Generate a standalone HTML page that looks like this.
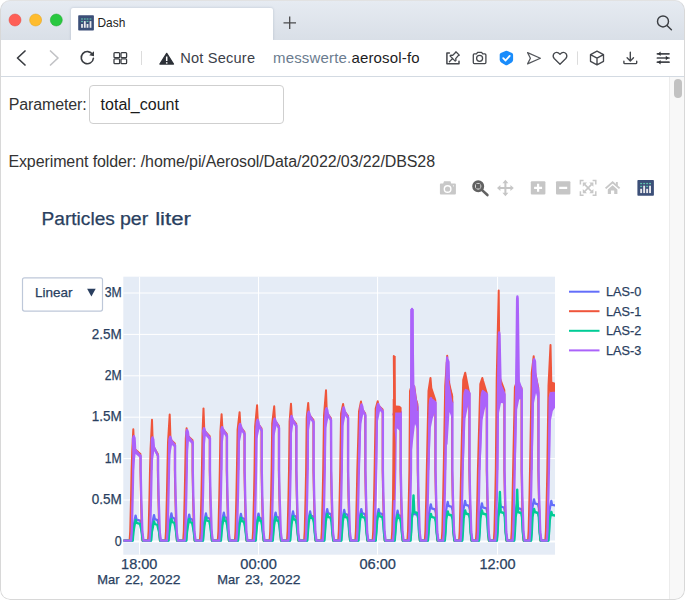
<!DOCTYPE html>
<html><head><meta charset="utf-8">
<style>
html,body{margin:0;padding:0;width:685px;height:600px;overflow:hidden;background:#fff;}
body{font-family:"Liberation Sans",sans-serif;position:relative;}
.win{position:absolute;left:0;top:0;width:685px;height:600px;border-radius:10px;overflow:hidden;background:#fff;}
.frame{position:absolute;left:0;top:0;width:683px;height:598px;border:1px solid #d8d8d8;border-top-color:#e2e2e2;border-radius:10px;pointer-events:none;}
.tabbar{position:absolute;left:0;top:0;width:685px;height:40px;background:linear-gradient(#e6ebf2,#d9dfe7);}
.tab{position:absolute;left:71px;top:7.5px;width:202px;height:32.5px;background:#fff;border-radius:2px 2px 0 0;box-shadow:0 0 2.5px rgba(70,90,120,0.28);}
.tb{position:absolute;left:0;top:40px;width:685px;height:36px;background:#fff;border-bottom:1px solid #d3dae2;}
.abs{position:absolute;}
.t{position:absolute;white-space:pre;line-height:1;}
.sb{position:absolute;left:669px;top:77px;width:16px;height:523px;background:#f8f8f8;border-left:1px solid #ececec;}
.thumb{position:absolute;left:4px;top:2px;width:8px;height:19px;border-radius:4px;background:#c2c2c2;}
.inp{position:absolute;left:89.3px;top:85px;width:192.5px;height:36.6px;border:1px solid #cfcfcf;border-radius:4px;background:#fff;}
svg{position:absolute;left:0;top:0;overflow:visible;}
</style></head><body>
<div class="win">
 <div class="tabbar"></div>
 <div class="tab"></div>
 <div class="tb"></div>
 <svg width="685" height="77" viewBox="0 0 685 77">
  <circle cx="15" cy="20" r="6" fill="#fe5f57" stroke="#e2463f" stroke-width="0.5"/>
  <circle cx="35.6" cy="20" r="6" fill="#febc2e" stroke="#e1a116" stroke-width="0.5"/>
  <circle cx="56.3" cy="20" r="6" fill="#28c840" stroke="#1aab29" stroke-width="0.5"/>
  <!-- dash favicon -->
  <rect x="78.2" y="15.2" width="15.7" height="15.4" rx="0.8" fill="#3c4f78"/>
  <g fill="#62c2ad"><rect x="81.1" y="18.4" width="1.8" height="1.2"/><rect x="83.9" y="18.4" width="1.8" height="1.2"/><rect x="86.6" y="18.4" width="1.8" height="1.2"/><rect x="89.6" y="18.4" width="1.8" height="1.2"/><rect x="81.1" y="20.9" width="1.8" height="1.2"/><rect x="86.6" y="20.9" width="1.8" height="1.2"/></g>
  <g fill="#e8e8ec"><rect x="81.1" y="24" width="1.8" height="3.8"/><rect x="83.9" y="21.1" width="1.8" height="6.7"/><rect x="86.6" y="24" width="1.8" height="3.8"/><rect x="89.6" y="21.1" width="1.8" height="6.7"/></g>
  <text x="97.5" y="27.2" font-family="Liberation Sans" font-size="11.9" fill="#222">Dash</text>
  <path d="M283.5 22.8 H296 M289.7 16.5 V29" stroke="#4a4a4c" stroke-width="1.3"/>
  <g fill="none" stroke="#3c3f44" stroke-width="1.45" stroke-linecap="round">
   <circle cx="663" cy="21.4" r="5.5"/>
   <path d="M667 25.4 L671.4 29.8"/>
  </g>
  <!-- toolbar -->
  <g fill="none" stroke-width="1.7" stroke-linecap="round" stroke-linejoin="round">
   <path d="M25 51 L17.5 58 L25 65" stroke="#3a3d42"/>
   <path d="M50.5 51 L58 58 L50.5 65" stroke="#c2c3c6"/>
  </g>
  <g fill="none" stroke="#3a3d42" stroke-width="1.6" stroke-linecap="round">
   <path d="M92.6 54.6 A6.1 6.1 0 1 0 93.4 58.2"/>
  </g>
  <path d="M94 51.2 L94 56.2 L89.2 55.2 Z" fill="#3a3d42"/>
  <g fill="none" stroke="#3a3d42" stroke-width="1.3">
   <rect x="114" y="52.7" width="5.6" height="4.9" rx="0.9"/><rect x="121" y="52.7" width="5.6" height="4.9" rx="0.9"/>
   <rect x="114" y="58.9" width="5.6" height="4.8" rx="0.9"/><rect x="121" y="58.9" width="5.6" height="4.8" rx="0.9"/>
  </g>
  <line x1="141.5" y1="51" x2="141.5" y2="65" stroke="#dcdcdc" stroke-width="1"/>
  <path d="M166.7 53.4 L173.5 64 L159.9 64 Z" fill="#2c3037" stroke="#2c3037" stroke-width="1.3" stroke-linejoin="round"/>
  <path d="M166.7 56.4 V60.9" stroke="#fff" stroke-width="1.5"/><rect x="165.95" y="62.2" width="1.5" height="1.4" fill="#fff"/>
  <text x="180.2" y="63.4" font-family="Liberation Sans" font-size="14.6" letter-spacing="0.2" fill="#3b4049">Not Secure</text>
  <defs><linearGradient id="fade" x1="0" x2="1"><stop offset="0" stop-color="#fff" stop-opacity="0"/><stop offset="1" stop-color="#fff"/></linearGradient></defs>
  <text x="273" y="63.4" font-family="Liberation Sans" font-size="15" letter-spacing="0.17" fill="#6b7c8f">messwerte.<tspan fill="#1c1c1e">aerosol-fo</tspan></text>
  <rect x="419.6" y="45" width="8" height="25" fill="#fff"/>
  <g fill="none" stroke="#45484d" stroke-width="1.4" stroke-linecap="round" stroke-linejoin="round">
   <!-- edit/pin -->
   <path d="M449.4 53.1 H446.9 V63.7 H459 V61.3" stroke-width="1.5"/>
   <path d="M455.9 51.7 L459.3 55.1 L458.2 55.7 L455.7 58.6 L456 60.3 L455.2 61.1 L450 55.9 L450.8 55.1 L452.5 55.4 L455.3 52.8 Z M452.7 58.4 L449.4 61.7" stroke-width="1.3"/>
   <!-- camera -->
   <path d="M473.3 54.9 Q473.3 53.9 474.3 53.9 H476.5 L477.6 52.4 H481.6 L482.7 53.9 H484.9 Q485.9 53.9 485.9 54.9 V62.6 Q485.9 63.6 484.9 63.6 H474.3 Q473.3 63.6 473.3 62.6 Z" stroke-width="1.3"/>
   <circle cx="479.6" cy="58.3" r="3" stroke-width="1.3"/>
   <!-- send -->
   <path d="M527.6 52.6 L540.4 58.2 L527.6 63.9 L530.4 58.2 Z" stroke="#55585d" stroke-width="1.25"/>
   <!-- heart -->
   <path d="M560 64.2 L554.2 58.5 Q552.4 56.4 553.7 54 Q556.6 50.8 560 54.2 Q563.4 50.8 566.3 54 Q567.6 56.4 565.8 58.5 Z" stroke-width="1.3"/>
   <!-- cube -->
   <path d="M597 51.1 L603.5 54.6 V61.3 L597 64.8 L590.5 61.3 V54.6 Z M590.5 54.6 L597 58.1 L603.5 54.6 M597 58.1 V64.8" stroke-width="1.35"/>
   <!-- download -->
   <path d="M630.3 52.2 V60.8 M627.1 57.8 L630.3 61 L633.5 57.8 M623.9 61.3 V62.7 Q623.9 63.6 624.8 63.6 H635.8 Q636.7 63.6 636.7 62.7 V61.3"/>
   <!-- sliders -->
   <path d="M657.4 53.8 H669 M657.4 58 H669 M657.4 62.2 H669" stroke-width="1.7"/>
  </g>
  <path d="M505.5 50.9 Q506.4 50.5 507.3 50.9 L512 53 Q513.1 53.5 513.1 54.7 V59.8 Q513.1 61.6 511.6 62.6 L507.5 65 Q506.4 65.6 505.3 65 L501.2 62.6 Q499.7 61.6 499.7 59.8 V54.7 Q499.7 53.5 500.8 53 Z" fill="#1a8cfb"/>
  <path d="M503.2 58.1 L505.6 60.5 L509.7 55.9" fill="none" stroke="#fff" stroke-width="1.8" stroke-linecap="round" stroke-linejoin="round"/>
  <g fill="#2e3136"><path d="M657.8 53.8 L660.6 51.5 L660.6 56.1 Z M668.6 58 L665.8 55.7 L665.8 60.3 Z M657.8 62.2 L660.6 59.9 L660.6 64.5 Z"/></g>
  <line x1="577.5" y1="51.4" x2="577.5" y2="64.8" stroke="#dcdcdc" stroke-width="1"/>
 </svg>
 <div class="t" style="left:8.8px;top:97px;font-size:16px;letter-spacing:-0.15px;color:#333;">Parameter:</div>
 <div class="inp"></div>
 <div class="t" style="left:100.6px;top:97px;font-size:16px;color:#1a1a1a;">total_count</div>
 <div class="t" style="left:8.4px;top:154.1px;font-size:16px;letter-spacing:-0.1px;color:#333;">Experiment folder: /home/pi/Aerosol/Data/2022/03/22/DBS28</div>
 <!-- modebar -->
 <svg width="685" height="600" viewBox="0 0 685 600">
  <path d="M440.8 183.6 H443.2 L444 181.2 H450.4 L451.2 183.6 H455 Q455.9 183.6 455.9 184.5 V193.6 Q455.9 194.5 455 194.5 H440.8 Q439.9 194.5 439.9 193.6 V184.5 Q439.9 183.6 440.8 183.6 Z" fill="#c8c8c8"/>
  <circle cx="447.6" cy="189" r="3.3" fill="none" stroke="#fff" stroke-width="1.4"/>
  <circle cx="453.4" cy="185.8" r="0.6" fill="#fff"/>
  <g fill="none" stroke="#626262" stroke-width="2.9"><circle cx="478.2" cy="186.3" r="4.55"/><path d="M481.8 189.9 L487.4 195" stroke-linecap="round" stroke-width="2.6"/></g>
  <rect x="475.9" y="184" width="4.6" height="4.6" fill="#626262"/>
  <g fill="none" stroke="#c6c6c6" stroke-width="2"><path d="M505.4 181.5 V194.5 M498.5 188 H512.3"/></g>
  <g fill="#c6c6c6"><path d="M502.4 183.2 L505.4 179.8 L508.4 183.2 Z M502.4 192.8 L505.4 196.2 L508.4 192.8 Z M500.4 185 L497 188 L500.4 191 Z M510.4 185 L513.8 188 L510.4 191 Z"/></g>
  <rect x="530.8" y="181.2" width="14.6" height="13.3" rx="1" fill="#c6c6c6"/>
  <path d="M538.1 183.8 V191.8 M534.1 187.8 H542.1" stroke="#fff" stroke-width="2.2"/>
  <rect x="556" y="181.2" width="14.4" height="13.3" rx="1" fill="#c6c6c6"/>
  <path d="M559.2 187.8 H567.2" stroke="#fff" stroke-width="2.2"/>
  <g fill="none" stroke="#c8c8c8" stroke-width="1.5">
   <path d="M580.4 184.6 V180.6 H583.6 M592.6 180.6 H595.8 V184.6 M595.8 191.2 V195.2 H592.6 M583.6 195.2 H580.4 V191.2"/>
   <path d="M584.6 184.3 L591.6 191.5 M591.6 184.3 L584.6 191.5" stroke-width="1.7"/>
  </g>
  <g fill="#c8c8c8"><path d="M582.8 182.6 H587 L582.8 186.8 Z M593.4 182.6 H589.2 L593.4 186.8 Z M582.8 193.2 H587 L582.8 189 Z M593.4 193.2 H589.2 L593.4 189 Z"/></g>
  <path d="M605.6 188.4 L612.6 182.2 L619.6 188.4" fill="none" stroke="#c8c8c8" stroke-width="1.9"/>
  <path d="M615.9 182 H617.8 V186.2 L615.9 184.6 Z" fill="#c8c8c8"/>
  <path d="M607.8 189.4 L612.6 185.3 L617.4 189.4 V194 H614.2 V190.6 H611 V194 H607.8 Z" fill="#c8c8c8"/>
  <rect x="637.4" y="179.9" width="16.5" height="15.9" rx="0.8" fill="#3c4f78"/>
  <g fill="#62c2ad"><rect x="640.2" y="182.9" width="1.9" height="1.3"/><rect x="643.2" y="182.9" width="1.9" height="1.3"/><rect x="646.2" y="182.9" width="1.9" height="1.3"/><rect x="649.1" y="182.9" width="1.9" height="1.3"/><rect x="640.2" y="185.8" width="1.9" height="1.3"/><rect x="646.2" y="185.8" width="1.9" height="1.3"/></g>
  <g fill="#e8e8ec"><rect x="640.2" y="188.8" width="1.9" height="4.3"/><rect x="643.2" y="185.7" width="1.9" height="7.4"/><rect x="646.2" y="188.8" width="1.9" height="4.3"/><rect x="649.1" y="185.7" width="1.9" height="7.4"/></g>
 </svg>
 <svg class="plot" width="685" height="600" viewBox="0 0 685 600">
<rect x="123.3" y="276.7" width="431.7" height="278" fill="#e5ecf6"/>
<line x1="123.3" x2="555" y1="293.0" y2="293.0" stroke="#fff" stroke-width="1"/><line x1="123.3" x2="555" y1="334.4" y2="334.4" stroke="#fff" stroke-width="1"/><line x1="123.3" x2="555" y1="375.8" y2="375.8" stroke="#fff" stroke-width="1"/><line x1="123.3" x2="555" y1="417.2" y2="417.2" stroke="#fff" stroke-width="1"/><line x1="123.3" x2="555" y1="458.6" y2="458.6" stroke="#fff" stroke-width="1"/><line x1="123.3" x2="555" y1="500.0" y2="500.0" stroke="#fff" stroke-width="1"/><line x1="139.6" x2="139.6" y1="276.7" y2="554.7" stroke="#fff" stroke-width="1"/><line x1="258.5" x2="258.5" y1="276.7" y2="554.7" stroke="#fff" stroke-width="1"/><line x1="377.6" x2="377.6" y1="276.7" y2="554.7" stroke="#fff" stroke-width="1"/><line x1="497.6" x2="497.6" y1="276.7" y2="554.7" stroke="#fff" stroke-width="1"/><line x1="123.3" x2="555" y1="541.4" y2="541.4" stroke="#fff" stroke-width="2"/>
<clipPath id="cp"><rect x="123.3" y="276.7" width="431.7" height="278"/></clipPath>
<g clip-path="url(#cp)"><polyline fill="none" stroke="#636efa" stroke-width="2.3" stroke-linejoin="round" points="123.3,540.6 132.5,540.6 133.2,532.0 133.9,524.6 134.6,520.6 135.6,515.6 136.4,519.6 140.1,520.6 141.0,524.6 141.9,532.0 142.9,540.6 150.9,540.6 151.6,532.0 152.3,524.1 153.0,520.1 154.0,515.1 154.8,519.1 157.5,520.1 158.4,524.1 159.3,532.0 160.3,540.6 168.3,540.6 169.0,532.0 169.7,522.5 170.4,518.5 171.4,513.5 172.2,517.5 174.5,518.5 175.4,522.5 176.3,532.0 177.3,540.6 186.1,540.6 186.8,532.0 187.5,523.6 188.2,519.6 189.2,514.6 190.0,518.6 192.2,519.6 193.1,523.6 194.0,532.0 195.0,540.6 202.8,540.6 203.5,532.0 204.2,522.5 204.9,518.5 205.9,513.5 206.7,517.5 209.4,518.5 210.3,522.5 211.2,532.0 212.2,540.6 220.7,540.6 221.4,532.0 222.1,521.7 222.8,517.7 223.8,512.7 224.6,516.7 226.4,517.7 227.3,521.7 228.2,532.0 229.2,540.6 237.8,540.6 238.5,532.0 239.2,522.9 239.9,518.9 240.9,513.9 241.7,517.9 244.1,518.9 245.0,522.9 245.9,532.0 246.9,540.6 255.4,540.6 256.1,532.0 256.8,522.6 257.5,518.6 258.5,513.6 259.3,517.6 261.2,518.6 262.1,522.6 263.0,532.0 264.0,540.6 272.5,540.6 273.2,532.0 273.9,521.6 274.6,517.6 275.6,512.6 276.4,516.6 278.5,517.6 279.4,521.6 280.3,532.0 281.3,540.6 289.9,540.6 290.6,532.0 291.3,520.5 292.0,516.5 293.0,511.5 293.8,515.5 295.9,516.5 296.8,520.5 297.7,532.0 298.7,540.6 307.0,540.6 307.7,532.0 308.4,520.5 309.1,516.5 310.1,511.5 310.9,515.5 313.1,516.5 314.0,520.5 314.9,532.0 315.9,540.6 324.1,540.6 324.8,532.0 325.5,518.1 326.2,514.1 327.2,509.1 328.0,513.1 330.7,514.1 331.6,518.1 332.5,532.0 333.5,540.6 341.1,540.6 341.8,532.0 342.5,518.9 343.2,514.9 344.2,509.9 345.0,513.9 347.6,514.9 348.5,518.9 349.4,532.0 350.4,540.6 358.2,540.6 358.9,532.0 359.6,518.1 360.3,514.1 361.3,509.1 362.1,513.1 364.9,514.1 365.8,518.1 366.7,532.0 367.7,540.6 375.5,540.6 376.2,532.0 376.9,518.1 377.6,514.1 378.6,509.1 379.4,513.1 382.3,514.1 383.2,518.1 384.1,532.0 385.1,540.6 394.5,540.6 395.2,532.0 395.9,519.7 396.6,515.7 397.6,510.7 398.4,514.7 400.2,515.7 401.1,519.7 402.0,532.0 403.0,540.6 410.3,540.6 411.0,532.0 411.7,518.9 412.4,514.9 413.4,509.9 414.2,513.9 417.4,514.9 418.3,518.9 419.2,532.0 420.2,540.6 427.7,540.6 428.4,532.0 429.1,513.3 429.8,509.3 430.8,504.3 431.6,508.3 435.0,509.3 435.9,513.3 436.8,532.0 437.8,540.6 444.6,540.6 445.3,532.0 446.0,510.9 446.7,506.9 447.7,501.9 448.5,505.9 451.8,506.9 452.7,510.9 453.6,532.0 454.6,540.6 462.0,540.6 462.7,532.0 463.4,509.9 464.1,505.9 465.1,500.9 465.9,504.9 469.0,505.9 469.9,509.9 470.8,532.0 471.8,540.6 478.8,540.6 479.5,532.0 480.2,512.3 480.9,508.3 481.9,503.3 482.7,507.3 486.4,508.3 487.3,512.3 488.2,532.0 489.2,540.6 496.7,540.6 497.4,532.0 498.1,511.5 498.8,507.5 499.8,502.5 500.6,506.5 504.0,507.5 504.9,511.5 505.8,532.0 506.8,540.6 514.0,540.6 514.7,532.0 515.4,513.1 516.1,509.1 517.1,504.1 517.9,508.1 521.2,509.1 522.1,513.1 523.0,532.0 524.0,540.6 530.9,540.6 531.6,532.0 532.3,508.3 533.0,504.3 534.0,499.3 534.8,503.3 538.0,504.3 538.9,508.3 539.8,532.0 540.8,540.6 548.2,540.6 548.9,532.0 549.6,509.9 550.3,505.9 551.3,500.9 552.1,504.9 558.9,505.9 559.8,509.9 560.7,532.0 561.7,540.6"/><polyline fill="none" stroke="#EF553B" stroke-width="2" stroke-linejoin="round" points="123.3,540.6 129.6,540.6 130.2,531.0 131.1,495.0 131.6,470.0 132.2,451.5 133.3,429.2 134.1,448.5 140.4,454.0 140.4,470.0 140.9,495.0 141.8,531.0 142.5,540.6 148.0,540.6 148.6,531.0 149.5,495.0 150.0,470.0 150.6,448.5 152.0,419.8 152.8,445.5 157.8,454.0 157.8,470.0 158.3,495.0 159.2,531.0 159.9,540.6 165.4,540.6 166.0,531.0 166.9,495.0 167.4,470.0 168.0,442.5 169.7,414.6 170.5,439.5 174.8,443.5 174.8,470.0 175.3,495.0 176.2,531.0 176.9,540.6 183.2,540.6 183.8,531.0 184.7,495.0 185.2,470.0 185.8,438.5 186.6,428.3 187.4,435.5 192.5,440.3 192.5,470.0 193.0,495.0 193.9,531.0 194.6,540.6 199.9,540.6 200.5,531.0 201.4,495.0 201.9,470.0 202.5,433.5 203.5,408.4 204.3,430.5 209.7,436.2 209.7,470.0 210.2,495.0 211.1,531.0 211.8,540.6 217.8,540.6 218.4,531.0 219.3,495.0 219.8,470.0 220.4,431.5 221.6,414.3 222.4,428.5 226.7,433.9 226.7,470.0 227.2,495.0 228.1,531.0 228.8,540.6 234.9,540.6 235.5,531.0 236.4,495.0 236.9,470.0 237.6,429.5 239.6,412.2 240.4,426.5 244.4,431.8 244.4,470.0 244.9,495.0 245.8,531.0 246.5,540.6 252.5,540.6 253.1,531.0 254.0,495.0 254.5,470.0 255.1,426.5 257.1,405.2 257.9,423.5 261.5,428.3 261.5,470.0 262.0,495.0 262.9,531.0 263.6,540.6 269.6,540.6 270.2,531.0 271.1,495.0 271.6,470.0 272.2,423.5 274.2,406.3 275.0,420.5 278.8,425.9 278.8,470.0 279.3,495.0 280.2,531.0 280.9,540.6 287.0,540.6 287.6,531.0 288.5,495.0 289.0,470.0 289.6,421.5 291.0,403.7 291.8,418.5 296.2,423.9 296.2,470.0 296.7,495.0 297.6,531.0 298.3,540.6 304.1,540.6 304.7,531.0 305.6,495.0 306.1,470.0 306.7,417.5 308.2,403.1 309.0,414.5 313.4,419.8 313.4,470.0 313.9,495.0 314.8,531.0 315.5,540.6 321.2,540.6 321.8,531.0 322.7,495.0 323.2,470.0 324.0,415.5 326.0,390.3 326.8,412.5 330.8,418.0 331.0,470.0 331.5,495.0 332.4,531.0 333.1,540.6 338.2,540.6 338.8,531.0 339.7,495.0 340.2,470.0 341.1,413.5 343.1,403.9 343.9,410.5 347.9,415.9 347.9,470.0 348.4,495.0 349.3,531.0 350.0,540.6 355.3,540.6 355.9,531.0 356.8,495.0 357.3,470.0 359.0,411.5 361.0,401.5 361.8,408.5 365.2,413.5 365.2,470.0 365.7,495.0 366.6,531.0 367.3,540.6 372.6,540.6 373.2,531.0 374.1,495.0 374.6,470.0 375.7,408.5 377.7,401.3 378.5,405.5 382.6,409.4 382.6,470.0 383.1,495.0 384.0,531.0 384.7,540.6 391.6,540.6 392.2,531.0 393.1,495.0 393.6,470.0 394.2,410.0 393.8,356.0 394.6,407.0 400.5,408.0 400.5,470.0 401.0,495.0 401.9,531.0 402.6,540.6 407.4,540.6 408.0,531.0 408.9,495.0 409.4,470.0 410.0,391.0 411.5,386.0 412.3,388.0 417.4,404.0 417.7,470.0 418.2,495.0 419.1,531.0 419.8,540.6 424.8,540.6 425.4,531.0 426.3,495.0 426.8,470.0 428.5,391.0 430.5,378.0 431.3,388.0 435.3,400.0 435.3,470.0 435.8,495.0 436.7,531.0 437.4,540.6 441.7,540.6 442.3,531.0 443.2,495.0 443.7,470.0 445.2,386.0 447.2,355.8 448.0,383.0 452.1,396.0 452.1,470.0 452.6,495.0 453.5,531.0 454.2,540.6 459.1,540.6 459.7,531.0 460.6,495.0 461.1,470.0 463.2,380.0 465.2,372.7 466.0,377.0 469.3,394.0 469.3,470.0 469.8,495.0 470.7,531.0 471.4,540.6 475.9,540.6 476.5,531.0 477.4,495.0 477.9,470.0 480.3,384.0 482.3,378.0 483.1,381.0 486.7,393.0 486.7,470.0 487.2,495.0 488.1,531.0 488.8,540.6 493.8,540.6 494.4,531.0 495.3,495.0 495.8,470.0 496.7,380.0 498.7,290.5 499.5,377.0 504.3,390.0 504.3,470.0 504.8,495.0 505.7,531.0 506.4,540.6 511.1,540.6 511.7,531.0 512.6,495.0 513.1,470.0 514.9,387.0 516.9,381.6 517.7,384.0 521.5,388.0 521.5,470.0 522.0,495.0 522.9,531.0 523.6,540.6 528.0,540.6 528.6,531.0 529.5,495.0 530.0,470.0 531.7,373.0 533.7,356.2 534.5,370.0 538.3,388.0 538.3,470.0 538.8,495.0 539.7,531.0 540.4,540.6 545.3,540.6 545.9,531.0 546.8,495.0 547.3,470.0 548.5,385.5 550.5,345.0 551.3,382.5 558.6,385.0 559.2,470.0 559.7,495.0 560.6,531.0 561.3,540.6"/><polyline fill="none" stroke="#00cc96" stroke-width="2.4" stroke-linejoin="round" points="123.3,540.6 132.7,540.6 133.4,532.0 134.1,527.9 134.8,523.9 135.7,519.9 136.5,522.9 140.0,523.9 140.9,527.9 141.7,532.0 142.7,540.6 151.1,540.6 151.8,532.0 152.5,529.0 153.2,525.0 154.1,521.5 154.9,524.0 157.4,525.0 158.3,529.0 159.1,532.0 160.1,540.6 168.5,540.6 169.2,532.0 169.9,527.0 170.6,523.0 171.5,519.0 172.3,522.0 174.4,523.0 175.3,527.0 176.1,532.0 177.1,540.6 186.3,540.6 187.0,532.0 187.7,527.0 188.4,523.0 189.3,519.0 190.1,522.0 192.1,523.0 193.0,527.0 193.8,532.0 194.8,540.6 203.0,540.6 203.7,532.0 204.4,525.5 205.1,521.5 206.0,517.5 206.8,520.5 209.3,521.5 210.2,525.5 211.0,532.0 212.0,540.6 220.9,540.6 221.6,532.0 222.3,525.5 223.0,521.5 223.9,517.5 224.7,520.5 226.3,521.5 227.2,525.5 228.0,532.0 229.0,540.6 238.0,540.6 238.7,532.0 239.4,525.9 240.1,521.9 241.0,517.9 241.8,520.9 244.0,521.9 244.9,525.9 245.7,532.0 246.7,540.6 255.6,540.6 256.3,532.0 257.0,525.1 257.7,521.1 258.6,517.1 259.4,520.1 261.1,521.1 262.0,525.1 262.8,532.0 263.8,540.6 272.7,540.6 273.4,532.0 274.1,525.1 274.8,521.1 275.7,517.1 276.5,520.1 278.4,521.1 279.3,525.1 280.1,532.0 281.1,540.6 290.1,540.6 290.8,532.0 291.5,524.3 292.2,520.3 293.1,516.3 293.9,519.3 295.8,520.3 296.7,524.3 297.5,532.0 298.5,540.6 307.2,540.6 307.9,532.0 308.6,522.7 309.3,518.7 310.2,514.7 311.0,517.7 313.0,518.7 313.9,522.7 314.7,532.0 315.7,540.6 324.3,540.6 325.0,532.0 325.7,521.9 326.4,517.9 327.3,513.9 328.1,516.9 330.6,517.9 331.5,521.9 332.3,532.0 333.3,540.6 341.3,540.6 342.0,532.0 342.7,521.9 343.4,517.9 344.3,513.9 345.1,516.9 347.5,517.9 348.4,521.9 349.2,532.0 350.2,540.6 358.4,540.6 359.1,532.0 359.8,521.9 360.5,517.9 361.4,513.9 362.2,516.9 364.8,517.9 365.7,521.9 366.5,532.0 367.5,540.6 375.7,540.6 376.4,532.0 377.1,521.1 377.8,517.1 378.7,513.1 379.5,516.1 382.2,517.1 383.1,521.1 383.9,532.0 384.9,540.6 394.7,540.6 395.4,532.0 396.1,522.7 396.8,518.7 397.7,514.7 398.5,517.7 400.1,518.7 401.0,522.7 401.8,532.0 402.8,540.6 410.5,540.6 411.2,532.0 411.9,517.0 412.6,513.0 413.5,495.4 414.3,512.0 417.3,513.0 418.2,517.0 419.0,532.0 420.0,540.6 427.9,540.6 428.6,532.0 429.3,521.9 430.0,517.9 430.9,513.9 431.7,516.9 434.9,517.9 435.8,521.9 436.6,532.0 437.6,540.6 444.8,540.6 445.5,532.0 446.2,519.5 446.9,515.5 447.8,511.5 448.6,514.5 451.7,515.5 452.6,519.5 453.4,532.0 454.4,540.6 462.2,540.6 462.9,532.0 463.6,518.5 464.3,514.5 465.2,510.5 466.0,513.5 468.9,514.5 469.8,518.5 470.6,532.0 471.6,540.6 479.0,540.6 479.7,532.0 480.4,518.5 481.1,514.5 482.0,510.5 482.8,513.5 486.3,514.5 487.2,518.5 488.0,532.0 489.0,540.6 496.9,540.6 497.6,532.0 498.3,517.0 499.0,513.0 499.9,492.0 500.7,512.0 503.9,513.0 504.8,517.0 505.6,532.0 506.6,540.6 514.2,540.6 514.9,532.0 515.6,517.0 516.3,513.0 517.2,489.6 518.0,512.0 521.1,513.0 522.0,517.0 522.8,532.0 523.8,540.6 531.1,540.6 531.8,532.0 532.5,517.0 533.2,513.0 534.1,508.9 534.9,512.0 537.9,513.0 538.8,517.0 539.6,532.0 540.6,540.6 548.4,540.6 549.1,532.0 549.8,520.0 550.5,516.0 551.4,512.0 552.2,515.0 558.8,516.0 559.7,520.0 560.5,532.0 561.5,540.6"/><polygon fill="#EF553B" points="394.2,410.0 393.8,356.0 394.6,407.0 400.5,408.0 400.8,412.0 395.7,412.0 395.1,414.0 394.3,412.0 393.5,414.5 395.5,417.0"/><polygon fill="#EF553B" points="410.0,391.0 411.5,386.0 412.3,388.0 417.4,404.0 417.7,407.4 413.4,393.0 412.3,311.0 412.0,309.0 411.7,311.5 411.3,398.0"/><polygon fill="#EF553B" points="428.5,391.0 430.5,378.0 431.3,388.0 435.3,400.0 435.6,402.7 432.4,400.0 431.8,400.0 431.0,398.0 430.2,400.5 429.8,405.0"/><polygon fill="#EF553B" points="445.2,386.0 447.2,355.8 448.0,383.0 452.1,396.0 452.4,402.7 449.1,385.0 448.5,362.0 447.7,360.0 446.9,362.5 446.5,390.0"/><polygon fill="#EF553B" points="463.2,380.0 465.2,372.7 466.0,377.0 469.3,394.0 469.6,393.3 467.1,390.5 466.5,392.0 465.7,390.0 464.9,392.5 464.5,395.5"/><polygon fill="#EF553B" points="480.3,384.0 482.3,378.0 483.1,381.0 486.7,393.0 487.0,394.4 484.2,392.0 483.6,393.0 482.8,391.0 482.0,393.5 481.6,397.0"/><polygon fill="#EF553B" points="496.7,380.0 498.7,290.5 499.5,377.0 504.3,390.0 504.6,394.4 500.6,385.0 499.5,334.5 499.2,332.5 498.9,335.0 498.0,390.0"/><polygon fill="#EF553B" points="514.9,387.0 516.9,381.6 517.7,384.0 521.5,388.0 521.8,390.0 518.8,381.6 517.7,298.3 517.4,296.3 517.1,298.8 516.2,386.6"/><polygon fill="#EF553B" points="531.7,373.0 533.7,356.2 534.5,370.0 538.3,388.0 538.6,393.0 535.6,375.0 535.0,361.2 534.2,359.2 533.4,361.7 533.0,380.0"/><polygon fill="#EF553B" points="548.5,385.5 550.5,345.0 551.3,382.5 558.6,385.0 558.9,393.0 552.4,393.0 551.8,395.0 551.0,393.0 550.2,395.5 549.8,398.0"/><polyline fill="none" stroke="#ab63fa" stroke-width="2.3" stroke-linejoin="round" points="123.3,540.6 131.1,540.6 131.8,531.0 132.7,495.0 133.2,470.0 133.5,455.0 133.0,438.7 133.8,436.2 134.6,438.2 135.2,450.0 140.7,456.0 140.7,470.0 141.2,495.0 142.4,532.0 143.5,540.6 149.5,540.6 150.2,531.0 151.1,495.0 151.6,470.0 151.9,452.0 151.7,439.9 152.5,437.4 153.3,439.4 153.9,447.0 158.1,456.0 158.1,470.0 158.6,495.0 159.8,532.0 160.9,540.6 166.9,540.6 167.6,531.0 168.5,495.0 169.0,470.0 169.3,446.0 169.4,439.3 170.2,436.8 171.0,438.8 171.6,441.0 175.1,445.5 175.1,470.0 175.6,495.0 176.8,532.0 177.9,540.6 184.7,540.6 185.4,531.0 186.3,495.0 186.8,470.0 187.1,442.0 186.3,432.5 187.1,430.0 187.9,432.0 188.5,437.0 192.8,442.3 192.8,470.0 193.3,495.0 194.5,532.0 195.6,540.6 201.4,540.6 202.1,531.0 203.0,495.0 203.5,470.0 203.8,437.0 203.2,430.8 204.0,428.3 204.8,430.3 205.4,432.0 210.0,438.2 210.0,470.0 210.5,495.0 211.7,532.0 212.8,540.6 219.3,540.6 220.0,531.0 220.9,495.0 221.4,470.0 221.7,435.0 221.3,429.6 222.1,427.1 222.9,429.1 223.5,430.0 227.0,435.9 227.0,470.0 227.5,495.0 228.7,532.0 229.8,540.6 236.4,540.6 237.1,531.0 238.0,495.0 238.5,470.0 238.9,433.0 239.3,426.4 240.1,423.9 240.9,425.9 241.5,428.0 244.7,433.8 244.7,470.0 245.2,495.0 246.4,532.0 247.5,540.6 254.0,540.6 254.7,531.0 255.6,495.0 256.1,470.0 256.4,430.0 256.8,422.3 257.6,419.8 258.4,421.8 259.0,425.0 261.8,430.3 261.8,470.0 262.3,495.0 263.5,532.0 264.6,540.6 271.1,540.6 271.8,531.0 272.7,495.0 273.2,470.0 273.5,427.0 273.9,421.1 274.7,418.6 275.5,420.6 276.1,422.0 279.1,427.9 279.1,470.0 279.6,495.0 280.8,532.0 281.9,540.6 288.5,540.6 289.2,531.0 290.1,495.0 290.6,470.0 290.9,425.0 290.7,418.4 291.5,415.9 292.3,417.9 292.9,420.0 296.5,425.9 296.5,470.0 297.0,495.0 298.2,532.0 299.3,540.6 305.6,540.6 306.3,531.0 307.2,495.0 307.7,470.0 308.0,421.0 307.9,414.3 308.7,411.8 309.5,413.8 310.1,416.0 313.7,421.8 313.7,470.0 314.2,495.0 315.4,532.0 316.5,540.6 322.7,540.6 323.4,531.0 324.3,495.0 324.8,470.0 325.3,419.0 325.7,410.8 326.5,408.3 327.3,410.3 327.9,414.0 331.1,420.0 331.3,470.0 331.8,495.0 333.0,532.0 334.1,540.6 339.7,540.6 340.4,531.0 341.3,495.0 341.8,470.0 342.4,417.0 342.8,409.9 343.6,407.4 344.4,409.4 345.0,412.0 348.2,417.9 348.2,470.0 348.7,495.0 349.9,532.0 351.0,540.6 356.8,540.6 357.5,531.0 358.4,495.0 358.9,470.0 360.3,415.0 360.7,406.9 361.5,404.4 362.3,406.4 362.9,410.0 365.5,415.5 365.5,470.0 366.0,495.0 367.2,532.0 368.3,540.6 374.1,540.6 374.8,531.0 375.7,495.0 376.2,470.0 377.0,412.0 377.4,406.4 378.2,403.9 379.0,405.9 379.6,407.0 382.9,411.4 382.9,470.0 383.4,495.0 384.6,532.0 385.7,540.6 393.1,540.6 393.8,531.0 394.7,495.0 395.2,470.0 395.5,417.0 393.5,414.5 394.3,412.0 395.1,414.0 395.7,412.0 400.8,412.0 400.8,470.0 401.3,495.0 402.5,532.0 403.6,540.6 408.9,540.6 409.6,531.0 410.5,495.0 411.0,470.0 411.3,398.0 411.7,311.5 412.0,309.0 412.3,311.0 413.4,393.0 417.7,407.4 418.0,470.0 418.5,495.0 419.7,532.0 420.8,540.6 426.3,540.6 427.0,531.0 427.9,495.0 428.4,470.0 429.8,405.0 430.2,400.5 431.0,398.0 431.8,400.0 432.4,400.0 435.6,402.7 435.6,470.0 436.1,495.0 437.3,532.0 438.4,540.6 443.2,540.6 443.9,531.0 444.8,495.0 445.3,470.0 446.5,390.0 446.9,362.5 447.7,360.0 448.5,362.0 449.1,385.0 452.4,402.7 452.4,470.0 452.9,495.0 454.1,532.0 455.2,540.6 460.6,540.6 461.3,531.0 462.2,495.0 462.7,470.0 464.5,395.5 464.9,392.5 465.7,390.0 466.5,392.0 467.1,390.5 469.6,393.3 469.6,470.0 470.1,495.0 471.3,532.0 472.4,540.6 477.4,540.6 478.1,531.0 479.0,495.0 479.5,470.0 481.6,397.0 482.0,393.5 482.8,391.0 483.6,393.0 484.2,392.0 487.0,394.4 487.0,470.0 487.5,495.0 488.7,532.0 489.8,540.6 495.3,540.6 496.0,531.0 496.9,495.0 497.4,470.0 498.0,390.0 498.9,335.0 499.2,332.5 499.5,334.5 500.6,385.0 504.6,394.4 504.6,470.0 505.1,495.0 506.3,532.0 507.4,540.6 512.6,540.6 513.3,531.0 514.2,495.0 514.7,470.0 516.2,386.6 517.1,298.8 517.4,296.3 517.7,298.3 518.8,381.6 521.8,390.0 521.8,470.0 522.3,495.0 523.5,532.0 524.6,540.6 529.5,540.6 530.2,531.0 531.1,495.0 531.6,470.0 533.0,380.0 533.4,361.7 534.2,359.2 535.0,361.2 535.6,375.0 538.6,393.0 538.6,470.0 539.1,495.0 540.3,532.0 541.4,540.6 546.8,540.6 547.5,531.0 548.4,495.0 548.9,470.0 549.8,398.0 550.2,395.5 551.0,393.0 551.8,395.0 552.4,393.0 558.9,393.0 559.5,470.0 560.0,495.0 561.2,532.0 562.3,540.6"/><polygon fill="#ab63fa" points="132.7,455.0 133.0,438.7 133.8,436.2 134.6,438.2 135.2,450.0 140.7,456.0 140.7,458.5 135.6,454.0 134.5,464.0 134.1,470.0 132.5,470.0"/><polygon fill="#ab63fa" points="151.1,452.0 151.7,439.9 152.5,437.4 153.3,439.4 153.9,447.0 158.1,456.0 158.1,458.5 154.3,451.0 152.9,461.0 152.5,470.0 150.9,470.0"/><polygon fill="#ab63fa" points="168.5,446.0 169.4,439.3 170.2,436.8 171.0,438.8 171.6,441.0 175.1,445.5 175.1,448.0 172.0,445.0 170.3,455.0 169.9,470.0 168.3,470.0"/><polygon fill="#ab63fa" points="186.3,442.0 186.3,432.5 187.1,430.0 187.9,432.0 188.5,437.0 192.8,442.3 192.8,444.8 188.9,441.0 188.1,451.0 187.7,470.0 186.1,470.0"/><polygon fill="#ab63fa" points="203.0,437.0 203.2,430.8 204.0,428.3 204.8,430.3 205.4,432.0 210.0,438.2 210.0,440.7 205.8,436.0 204.8,446.0 204.4,470.0 202.8,470.0"/><polygon fill="#ab63fa" points="220.9,435.0 221.3,429.6 222.1,427.1 222.9,429.1 223.5,430.0 227.0,435.9 227.0,438.4 223.9,434.0 222.7,444.0 222.3,470.0 220.7,470.0"/><polygon fill="#ab63fa" points="238.1,433.0 239.3,426.4 240.1,423.9 240.9,425.9 241.5,428.0 244.7,433.8 244.7,436.3 241.9,432.0 239.9,442.0 239.4,470.0 237.8,470.0"/><polygon fill="#ab63fa" points="255.6,430.0 256.8,422.3 257.6,419.8 258.4,421.8 259.0,425.0 261.8,430.3 261.8,432.8 259.4,429.0 257.4,439.0 257.0,470.0 255.4,470.0"/><polygon fill="#ab63fa" points="272.7,427.0 273.9,421.1 274.7,418.6 275.5,420.6 276.1,422.0 279.1,427.9 279.1,430.4 276.5,426.0 274.5,436.0 274.1,470.0 272.5,470.0"/><polygon fill="#ab63fa" points="290.1,425.0 290.7,418.4 291.5,415.9 292.3,417.9 292.9,420.0 296.5,425.9 296.5,428.4 293.3,424.0 291.9,434.0 291.5,470.0 289.9,470.0"/><polygon fill="#ab63fa" points="307.2,421.0 307.9,414.3 308.7,411.8 309.5,413.8 310.1,416.0 313.7,421.8 313.7,424.3 310.5,420.0 309.0,430.0 308.6,470.0 307.0,470.0"/><polygon fill="#ab63fa" points="324.5,419.0 325.7,410.8 326.5,408.3 327.3,410.3 327.9,414.0 331.1,420.0 331.1,422.5 328.3,418.0 326.3,428.0 325.7,470.0 324.1,470.0"/><polygon fill="#ab63fa" points="341.6,417.0 342.8,409.9 343.6,407.4 344.4,409.4 345.0,412.0 348.2,417.9 348.2,420.4 345.4,416.0 343.4,426.0 342.7,470.0 341.1,470.0"/><polygon fill="#ab63fa" points="359.5,415.0 360.7,406.9 361.5,404.4 362.3,406.4 362.9,410.0 365.5,415.5 365.5,418.0 363.3,414.0 361.3,424.0 359.8,470.0 358.2,470.0"/><polygon fill="#ab63fa" points="376.2,412.0 377.4,406.4 378.2,403.9 379.0,405.9 379.6,407.0 382.9,411.4 382.9,413.9 380.0,411.0 378.0,421.0 377.1,470.0 375.5,470.0"/><polygon fill="#ab63fa" points="394.7,417.0 393.5,414.5 394.3,412.0 395.1,414.0 395.7,412.0 400.8,412.0 400.8,414.5 396.1,416.0 396.5,426.0 396.1,470.0 394.5,470.0"/><polygon fill="#ab63fa" points="410.5,398.0 411.7,311.5 412.0,309.0 412.3,311.0 413.4,393.0 417.7,407.4 417.7,409.9 413.8,397.0 412.3,407.0 411.9,470.0 410.3,470.0"/><polygon fill="#ab63fa" points="429.0,405.0 430.2,400.5 431.0,398.0 431.8,400.0 432.4,400.0 435.6,402.7 435.6,411.7 432.8,418.0 430.8,428.0 429.3,470.0 427.7,470.0"/><polygon fill="#ab63fa" points="445.7,390.0 446.9,362.5 447.7,360.0 448.5,362.0 449.1,385.0 452.4,402.7 452.4,411.7 449.5,403.0 447.5,413.0 446.2,470.0 444.6,470.0"/><polygon fill="#ab63fa" points="463.7,395.5 464.9,392.5 465.7,390.0 466.5,392.0 467.1,390.5 469.6,393.3 469.6,402.3 467.5,408.5 465.5,418.5 463.6,470.0 462.0,470.0"/><polygon fill="#ab63fa" points="480.8,397.0 482.0,393.5 482.8,391.0 483.6,393.0 484.2,392.0 487.0,394.4 487.0,403.4 484.6,410.0 482.6,420.0 480.4,470.0 478.8,470.0"/><polygon fill="#ab63fa" points="497.2,390.0 498.9,335.0 499.2,332.5 499.5,334.5 500.6,385.0 504.6,394.4 504.6,403.4 501.0,403.0 499.0,413.0 498.3,470.0 496.7,470.0"/><polygon fill="#ab63fa" points="515.4,386.6 517.1,298.8 517.4,296.3 517.7,298.3 518.8,381.6 521.8,390.0 521.8,399.0 519.2,399.6 517.2,409.6 515.6,470.0 514.0,470.0"/><polygon fill="#ab63fa" points="532.2,380.0 533.4,361.7 534.2,359.2 535.0,361.2 535.6,375.0 538.6,393.0 538.6,402.0 536.0,393.0 534.0,403.0 532.5,470.0 530.9,470.0"/><polygon fill="#ab63fa" points="549.0,398.0 550.2,395.5 551.0,393.0 551.8,395.0 552.4,393.0 558.9,393.0 558.9,402.0 552.8,411.0 550.8,421.0 549.8,470.0 548.2,470.0"/><polygon fill="#EF553B" points="392.4,500.0 392.7,399.0 393.4,399.0 393.5,356.0 395.7,356.0 395.8,405.5 399.5,405.8 401.2,407.0 401.2,413.0 396.0,414.0 394.6,500.0"/><polygon fill="#ab63fa" points="394.6,430.0 395.2,412.5 401.2,412.5 401.2,432.0 396.5,428.0 396.0,445.0"/><polygon fill="#EF553B" points="413.2,385.0 415.2,386.0 417.6,404.0 417.8,411.0 414.5,410.0"/><polygon fill="#EF553B" points="448.0,378.0 449.6,381.0 453.1,396.0 453.1,403.0 449.0,396.0"/><polygon fill="#ab63fa" points="445.0,440.0 445.5,380.0 446.0,356.5 448.2,356.5 448.5,378.0 452.3,401.0 452.5,420.0 449.5,412.0 447.5,445.0"/><polygon fill="#ab63fa" points="410.0,440.0 410.3,309.0 413.7,309.0 413.8,384.0 415.0,386.0 417.4,403.0 417.6,430.0 415.0,424.0 412.0,450.0"/></g>
<g font-family="Liberation Sans, sans-serif" fill="#2a3f5f" stroke="#2a3f5f" stroke-width="0.25">
<text x="104.7" y="297.1" text-anchor="start" font-size="14" textLength="17" lengthAdjust="spacingAndGlyphs">3M</text><text x="91.7" y="338.5" text-anchor="start" font-size="14" textLength="30" lengthAdjust="spacingAndGlyphs">2.5M</text><text x="104.7" y="379.90000000000003" text-anchor="start" font-size="14" textLength="17" lengthAdjust="spacingAndGlyphs">2M</text><text x="91.7" y="421.3" text-anchor="start" font-size="14" textLength="30" lengthAdjust="spacingAndGlyphs">1.5M</text><text x="104.7" y="462.70000000000005" text-anchor="start" font-size="14" textLength="17" lengthAdjust="spacingAndGlyphs">1M</text><text x="91.7" y="504.1" text-anchor="start" font-size="14" textLength="30" lengthAdjust="spacingAndGlyphs">0.5M</text><text x="114.7" y="545.5" text-anchor="start" font-size="14" textLength="7" lengthAdjust="spacingAndGlyphs">0</text><text x="121.1" y="569" text-anchor="start" font-size="14" textLength="36.3" lengthAdjust="spacingAndGlyphs">18:00</text><text x="97.3" y="584.4" text-anchor="start" font-size="12.4" textLength="22.2" lengthAdjust="spacingAndGlyphs">Mar</text><text x="125.0" y="584.4" text-anchor="start" font-size="12.4" textLength="18.6" lengthAdjust="spacingAndGlyphs">22,</text><text x="149.6" y="584.4" text-anchor="start" font-size="12.4" textLength="31.0" lengthAdjust="spacingAndGlyphs">2022</text><text x="240.3" y="569" text-anchor="start" font-size="14" textLength="36.6" lengthAdjust="spacingAndGlyphs">00:00</text><text x="217.3" y="584.4" text-anchor="start" font-size="12.4" textLength="22.2" lengthAdjust="spacingAndGlyphs">Mar</text><text x="245.0" y="584.4" text-anchor="start" font-size="12.4" textLength="18.6" lengthAdjust="spacingAndGlyphs">23,</text><text x="269.6" y="584.4" text-anchor="start" font-size="12.4" textLength="31.0" lengthAdjust="spacingAndGlyphs">2022</text><text x="359.4" y="569" text-anchor="start" font-size="14" textLength="36.6" lengthAdjust="spacingAndGlyphs">06:00</text><text x="479.4" y="569" text-anchor="start" font-size="14" textLength="36.3" lengthAdjust="spacingAndGlyphs">12:00</text>
<line x1="569" x2="599.5" y1="291.7" y2="291.7" stroke="#636efa" stroke-width="2"/><text x="606" y="296.3" text-anchor="start" font-size="12" textLength="35.3" lengthAdjust="spacingAndGlyphs">LAS-0</text><line x1="569" x2="599.5" y1="311.2" y2="311.2" stroke="#EF553B" stroke-width="2"/><text x="606" y="315.9" text-anchor="start" font-size="12" textLength="35.3" lengthAdjust="spacingAndGlyphs">LAS-1</text><line x1="569" x2="599.5" y1="330.8" y2="330.8" stroke="#00cc96" stroke-width="2"/><text x="606" y="335.4" text-anchor="start" font-size="12" textLength="35.3" lengthAdjust="spacingAndGlyphs">LAS-2</text><line x1="569" x2="599.5" y1="350.4" y2="350.4" stroke="#ab63fa" stroke-width="2"/><text x="606" y="355.0" text-anchor="start" font-size="12" textLength="35.3" lengthAdjust="spacingAndGlyphs">LAS-3</text>
<text x="41.6" y="225.1" font-size="17.6" textLength="73.2" lengthAdjust="spacingAndGlyphs">Particles</text><text x="119.9" y="225.1" font-size="17.6" textLength="28.3" lengthAdjust="spacingAndGlyphs">per</text><text x="155.2" y="225.1" font-size="17.6" textLength="35.8" lengthAdjust="spacingAndGlyphs">liter</text>
<rect x="22.5" y="277.8" width="80" height="33.3" rx="2" fill="#fff" stroke="#bec8d9" stroke-width="1.2"/>
<text x="35.1" y="297.3" font-size="13" textLength="37.5" lengthAdjust="spacingAndGlyphs">Linear</text>
<path d="M87.1 288.7 L95.7 288.7 L91.4 296.6 Z" stroke="none"/>
</g>
</svg>
 <div class="sb"><div class="thumb"></div></div>
 <div class="frame"></div>
</div>
</body></html>
